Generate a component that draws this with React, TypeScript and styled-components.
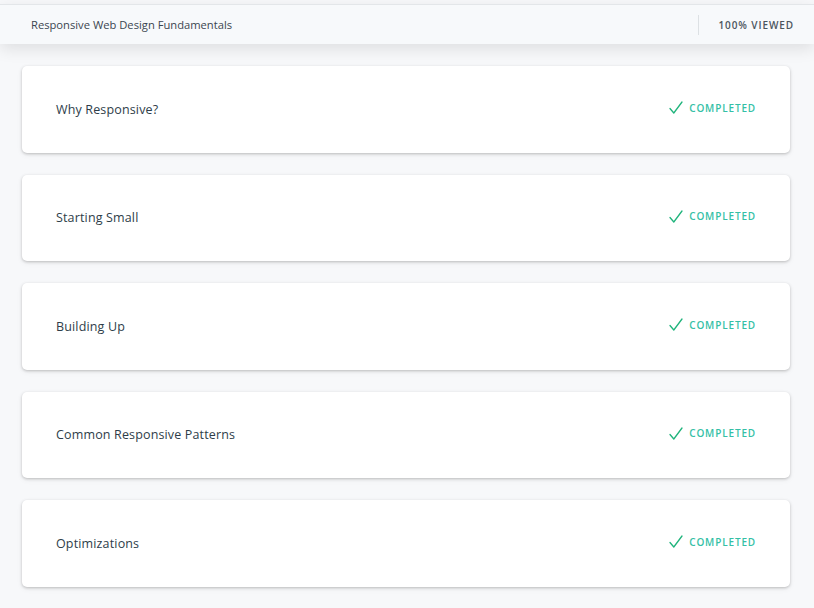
import styled, { createGlobalStyle } from "styled-components";

const GlobalStyle = createGlobalStyle`
  html, body {
    margin: 0;
    padding: 0;
    background: #f7f8fa;
    font-family: "Open Sans", "Liberation Sans", sans-serif;
  }
`;

const Page = styled.div`
  min-height: 608px;
  background: #f7f8fa;
  padding-top: 4px;
  box-sizing: border-box;
`;

const Header = styled.header`
  position: relative;
  height: 39px;
  display: flex;
  align-items: center;
  justify-content: space-between;
  padding: 0 20px 0 31px;
  background: #f7f9fb;
  border-top: 1px solid #e3e6e9;
  box-shadow: 0 5px 16px rgba(0, 0, 0, 0.1);
`;

const CourseTitle = styled.span`
  font-size: 11.2px;
  color: #3b4650;
`;

const Progress = styled.div`
  display: flex;
  align-items: center;
  height: 20px;
  padding-left: 19px;
  border-left: 1px solid #dde1e4;
  font-size: 10px;
  font-weight: 600;
  letter-spacing: 0.9px;
  color: #4b555e;
`;

const List = styled.main`
  display: flex;
  flex-direction: column;
  gap: 22px;
  padding: 22px 24px 20px 22px;
`;

const Card = styled.div`
  height: 86.5px;
  display: flex;
  align-items: center;
  justify-content: space-between;
  padding: 0 34px;
  background: #ffffff;
  border-radius: 5px;
  box-shadow: 0 1px 3px rgba(0, 0, 0, 0.22), 0 2px 6px rgba(0, 0, 0, 0.05);
`;

const LessonTitle = styled.span`
  font-size: 12.5px;
  font-weight: 500;
  color: #2e3d49;
  letter-spacing: 0.15px;
`;

const Status = styled.div`
  display: flex;
  align-items: center;
  gap: 6px;
  margin-top: -3px;
  font-size: 10px;
  font-weight: 600;
  letter-spacing: 0.85px;
  color: #35bfa6;
`;

const Check = () => (
  <svg width="14" height="13" viewBox="0 0 14 13" fill="none">
    <path d="M1 7.5 L4.8 12 L13 1" stroke="#20b47c" strokeWidth="1.3" strokeLinecap="round" strokeLinejoin="round" />
  </svg>
);

const lessons = [
  "Why Responsive?",
  "Starting Small",
  "Building Up",
  "Common Responsive Patterns",
  "Optimizations",
];

export default function App() {
  return (
    <Page>
      <GlobalStyle />
      <Header>
        <CourseTitle>Responsive Web Design Fundamentals</CourseTitle>
        <Progress>100% VIEWED</Progress>
      </Header>
      <List>
        {lessons.map((title) => (
          <Card key={title}>
            <LessonTitle>{title}</LessonTitle>
            <Status>
              <Check />
              COMPLETED
            </Status>
          </Card>
        ))}
      </List>
    </Page>
  );
}
